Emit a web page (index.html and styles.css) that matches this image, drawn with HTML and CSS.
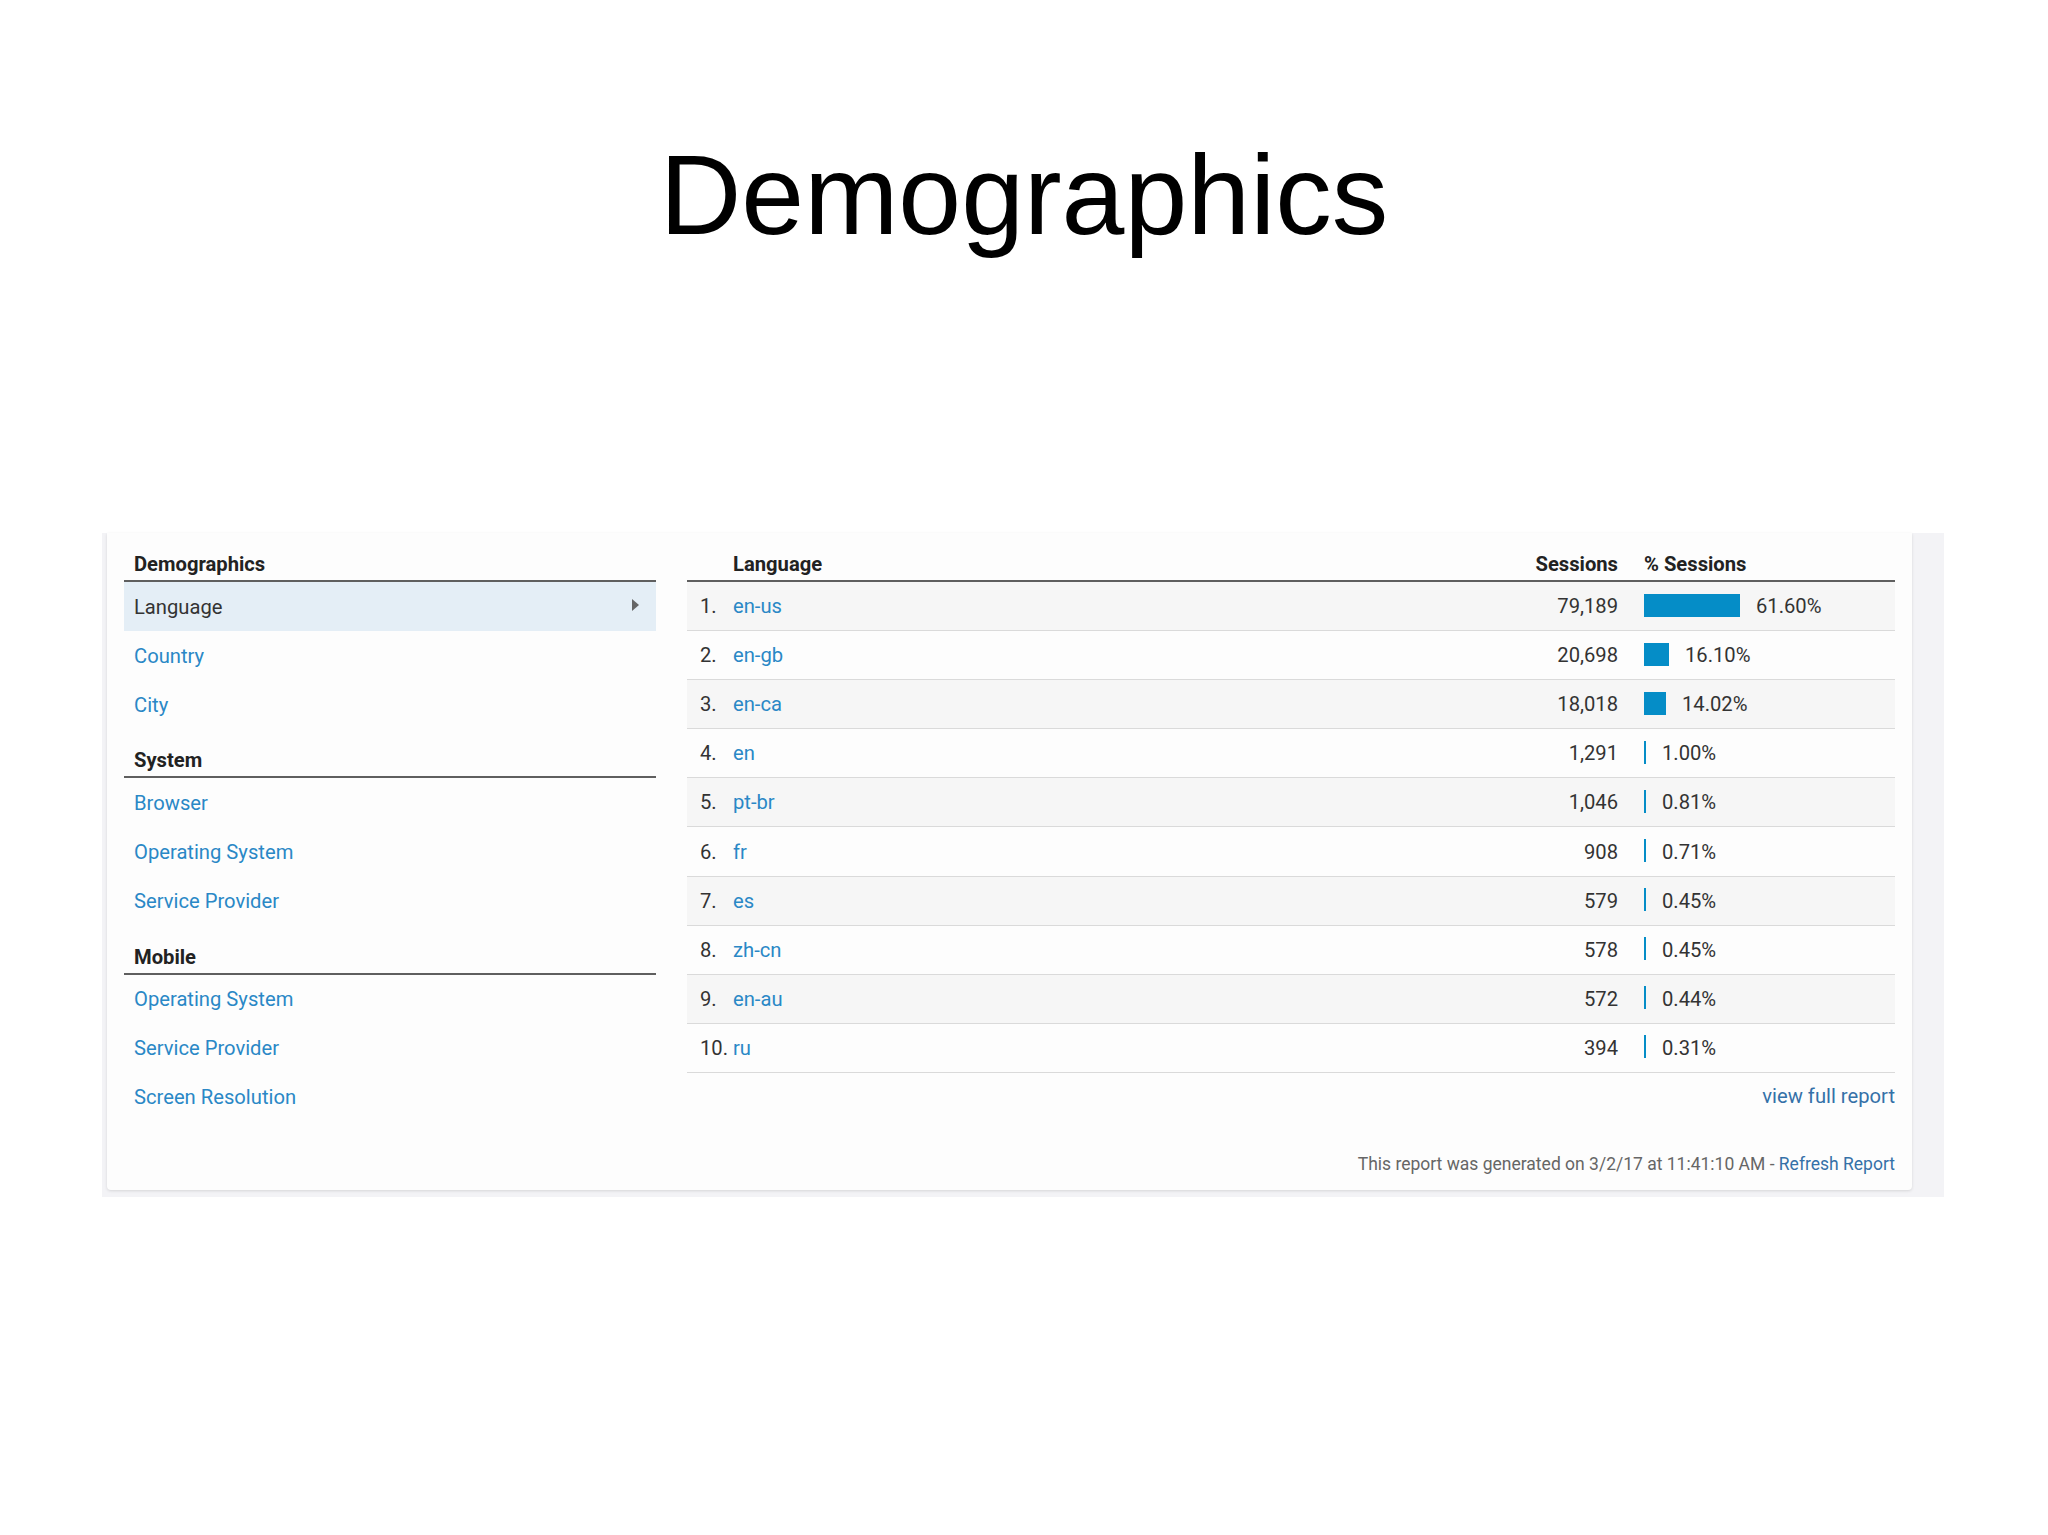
FILE: index.html
```html
<!DOCTYPE html>
<html lang="en">
<head>
<meta charset="utf-8">
<title>Demographics</title>
<link rel="stylesheet" href="styles.css">
</head>
<body>
<h1 class="title">Demographics</h1>
<div class="panel">
  <div class="card">
    <nav class="nav">
      <div class="nav-head">Demographics</div>
      <div class="nav-item active"><span>Language</span><span class="caret"></span></div>
      <div class="nav-item"><a href="#">Country</a></div>
      <div class="nav-item"><a href="#">City</a></div>
      <div class="nav-head">System</div>
      <div class="nav-item"><a href="#">Browser</a></div>
      <div class="nav-item"><a href="#">Operating System</a></div>
      <div class="nav-item"><a href="#">Service Provider</a></div>
      <div class="nav-head">Mobile</div>
      <div class="nav-item"><a href="#">Operating System</a></div>
      <div class="nav-item"><a href="#">Service Provider</a></div>
      <div class="nav-item"><a href="#">Screen Resolution</a></div>
    </nav>
    <section class="report">
      <div class="table">
        <div class="row head">
          <span class="c-num"></span>
          <span class="c-name">Language</span>
          <span class="c-sess">Sessions</span>
          <span class="c-pct">% Sessions</span>
        </div>
        <div class="row shaded">
          <span class="c-num">1.</span><a class="c-name" href="#">en-us</a><span class="c-sess">79,189</span>
          <span class="c-pct"><span class="bar" style="width:96px"></span>61.60%</span>
        </div>
        <div class="row">
          <span class="c-num">2.</span><a class="c-name" href="#">en-gb</a><span class="c-sess">20,698</span>
          <span class="c-pct"><span class="bar" style="width:25px"></span>16.10%</span>
        </div>
        <div class="row shaded">
          <span class="c-num">3.</span><a class="c-name" href="#">en-ca</a><span class="c-sess">18,018</span>
          <span class="c-pct"><span class="bar" style="width:22px"></span>14.02%</span>
        </div>
        <div class="row">
          <span class="c-num">4.</span><a class="c-name" href="#">en</a><span class="c-sess">1,291</span>
          <span class="c-pct"><span class="bar" style="width:2px"></span>1.00%</span>
        </div>
        <div class="row shaded">
          <span class="c-num">5.</span><a class="c-name" href="#">pt-br</a><span class="c-sess">1,046</span>
          <span class="c-pct"><span class="bar" style="width:2px"></span>0.81%</span>
        </div>
        <div class="row">
          <span class="c-num">6.</span><a class="c-name" href="#">fr</a><span class="c-sess">908</span>
          <span class="c-pct"><span class="bar" style="width:2px"></span>0.71%</span>
        </div>
        <div class="row shaded">
          <span class="c-num">7.</span><a class="c-name" href="#">es</a><span class="c-sess">579</span>
          <span class="c-pct"><span class="bar" style="width:2px"></span>0.45%</span>
        </div>
        <div class="row">
          <span class="c-num">8.</span><a class="c-name" href="#">zh-cn</a><span class="c-sess">578</span>
          <span class="c-pct"><span class="bar" style="width:2px"></span>0.45%</span>
        </div>
        <div class="row shaded">
          <span class="c-num">9.</span><a class="c-name" href="#">en-au</a><span class="c-sess">572</span>
          <span class="c-pct"><span class="bar" style="width:2px"></span>0.44%</span>
        </div>
        <div class="row">
          <span class="c-num">10.</span><a class="c-name" href="#">ru</a><span class="c-sess">394</span>
          <span class="c-pct"><span class="bar" style="width:2px"></span>0.31%</span>
        </div>
      </div>
      <div class="more"><a href="#">view full report</a></div>
      <div class="footer">This report was generated on 3/2/17 at 11:41:10 AM - <a href="#">Refresh Report</a></div>
    </section>
  </div>
</div>
</body>
</html>
```
FILE: styles.css
```css
html, body {
  margin: 0;
  padding: 0;
  background: #ffffff;
}

body {
  font-family: Roboto, "Liberation Sans", Arial, sans-serif;
  color: #333333;
}

a {
  text-decoration: none;
  color: #2a88c6;
}

.title {
  margin: 130px 0 0 0;
  font-family: "Liberation Sans", Arial, sans-serif;
  font-weight: normal;
  font-size: 113px;
  line-height: 130px;
  text-align: center;
  color: #000000;
}

.panel {
  margin: 273px 0 0 102px;
  width: 1842px;
  box-sizing: border-box;
  padding: 0 32px 7px 5px;
  background: #f3f3f6;
}

.card {
  display: flex;
  gap: 31px;
  padding: 0 17px 14px 17px;
  background: #fdfdfd;
  border-radius: 0 0 4px 4px;
  box-shadow: 0 1px 3px rgba(0, 0, 0, 0.12);
  font-size: 20.2px;
  line-height: 24px;
}

.nav {
  width: 532px;
  flex: none;
}

.nav-head {
  height: 49px;
  box-sizing: border-box;
  padding: 0 10px 4px;
  display: flex;
  align-items: flex-end;
  font-weight: bold;
  color: #222222;
  border-bottom: 2px solid #5f5f5f;
}

.nav-item {
  height: 49.1px;
  box-sizing: border-box;
  padding: 0 17px 0 10px;
  display: flex;
  align-items: center;
  justify-content: space-between;
}

.nav-item.active {
  background: #e4eef6;
  color: #333333;
}

.caret {
  width: 0;
  height: 0;
  border-left: 7px solid #666666;
  border-top: 6px solid transparent;
  border-bottom: 6px solid transparent;
  margin-bottom: 4px;
}

.report {
  flex: 1;
  display: flex;
  flex-direction: column;
}

.row {
  display: grid;
  grid-template-columns: 46px 1fr 120px 277px;
  align-items: center;
  height: 49.1px;
  box-sizing: border-box;
  border-bottom: 1px solid #dadada;
}

.row.shaded {
  background: #f6f6f6;
}

.row.head {
  height: 49px;
  align-items: end;
  padding-bottom: 4px;
  border-bottom: 2px solid #5f5f5f;
  font-weight: bold;
  color: #222222;
  background: transparent;
}

.c-num {
  padding-left: 13px;
}

.c-name {
  white-space: nowrap;
}

.c-sess {
  text-align: right;
}

.c-pct {
  padding-left: 26px;
  display: flex;
  align-items: center;
}

.bar {
  display: inline-block;
  height: 23px;
  background: #058dc7;
  margin-right: 16px;
  margin-top: -2px;
}

.more {
  margin-top: 11px;
  text-align: right;
}

.more a {
  color: #3571a8;
}

.footer {
  margin-top: 44px;
  text-align: right;
  font-size: 17.5px;
  line-height: 24px;
  color: #666666;
}

.footer a {
  color: #3571a8;
}
```
